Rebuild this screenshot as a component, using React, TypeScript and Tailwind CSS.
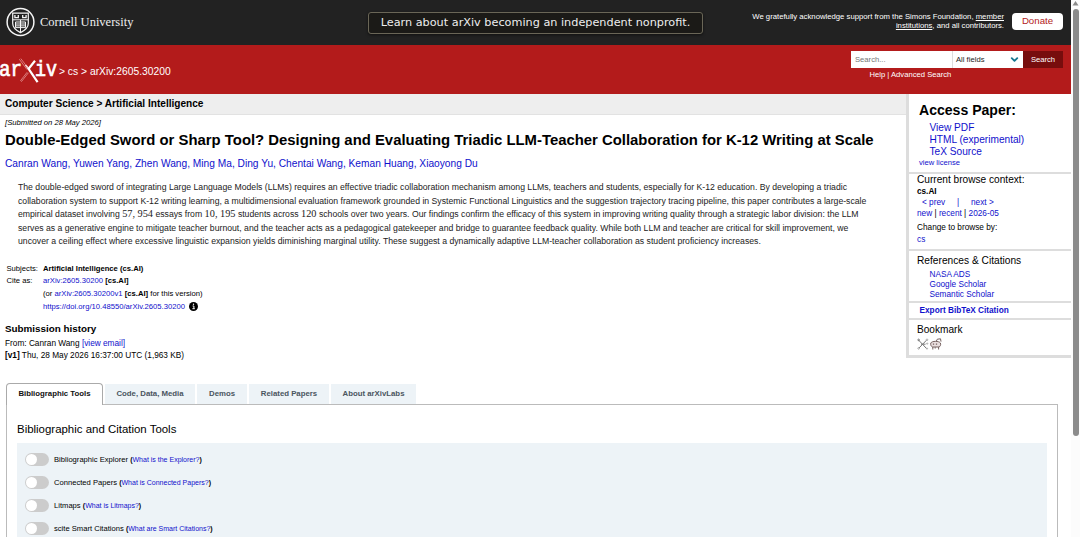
import type { ReactNode } from "react";
import { ChevronDown } from "lucide-react";

const authors = [
  "Canran Wang",
  "Yuwen Yang",
  "Zhen Wang",
  "Ming Ma",
  "Ding Yu",
  "Chentai Wang",
  "Keman Huang",
  "Xiaoyong Du",
];

const tabs = [
  { label: "Code, Data, Media", width: "w-[90px]" },
  { label: "Demos", width: "w-[50px]" },
  { label: "Related Papers", width: "w-[80px]" },
  { label: "About arXivLabs", width: "w-[85px]" },
];

const tools = [
  { name: "Bibliographic Explorer", help: "What is the Explorer?" },
  { name: "Connected Papers", help: "What is Connected Papers?" },
  { name: "Litmaps", help: "What is Litmaps?" },
  { name: "scite Smart Citations", help: "What are Smart Citations?" },
];

function Link({ children, className = "" }: { children: ReactNode; className?: string }) {
  return (
    <a href="#" className={`text-[#1010cc] ${className}`}>
      {children}
    </a>
  );
}

function Num({ children }: { children: ReactNode }) {
  return <span className="font-['Liberation_Serif'] text-[10.3px] leading-none">{children}</span>;
}

function CornellSeal() {
  return (
    <svg width="30" height="30" viewBox="0 0 30 30" fill="none" stroke="#f4f4f4">
      <circle cx="15.5" cy="15" r="13.4" strokeWidth="1.5" />
      <g transform="translate(.5 0)">
        <path d="M7.2 6.2h15.6v10.2c0 4.6-3.6 7-7.8 9.2-4.2-2.2-7.8-4.6-7.8-9.2z" strokeWidth="1.2" />
        <path d="M7.2 12.8h15.6M15 13v12.5" strokeWidth="1" />
        <path d="M9.4 8v2.6h3.4V8M17.2 8v2.6h3.4V8" strokeWidth="1.3" />
        <path d="M10 15h10v5.6H10zM10 17h10M10 18.9h10" strokeWidth="1" />
      </g>
    </svg>
  );
}

function ArxivLogo() {
  return (
    <svg width="58" height="28" viewBox="0 0 58 28" fill="#fff">
      <g className="font-['Liberation_Mono']" fontSize="21.5" stroke="#fff" strokeWidth="0.7">
        <text x="-1" y="19" textLength="23" lengthAdjust="spacingAndGlyphs">ar</text>
        <text x="35" y="19" textLength="22" lengthAdjust="spacingAndGlyphs">iv</text>
      </g>
      <path d="M35 3.8 28.6 11.8 37.6 25.2" fill="none" stroke="#fff" strokeWidth="2.2" />
      <path d="M28.6 11.8 25.5 8" fill="none" stroke="#fff" strokeWidth="1.6" />
      <path
        d="M19.3 2.2 27 12.6M20.8 1.6 28 11M27.2 15.2 20.6 23.6l1 .8 6.8-8.6"
        fill="none"
        stroke="#e9a5a5"
        strokeWidth="0.7"
      />
    </svg>
  );
}

function Header() {
  return (
    <header className="text-white">
      <div className="flex h-[45px] items-center bg-[#222]">
        <div className="flex w-[368px] items-center gap-[5px] pb-px pl-[5px]">
          <CornellSeal />
          <span className="whitespace-nowrap font-['Liberation_Serif'] text-[12.5px] text-[#eee]">
            Cornell University
          </span>
        </div>
        <div className="flex h-[22px] w-[335px] items-center justify-center whitespace-nowrap rounded-[3px] border border-[#6a6657] bg-[#1b1a17] pt-px font-['DejaVu_Sans'] text-[11.26px] text-[#eee] shadow-[0_1px_3px_#0008]">
          Learn about arXiv becoming an independent nonprofit.
        </div>
        <div className="ml-auto mr-[8px] whitespace-nowrap pb-[3px] text-right text-[7.73px] leading-[9px]">
          We gratefully acknowledge support from the Simons Foundation, <span className="underline">member</span>
          <br />
          <span className="underline">institutions</span>, and all contributors.
        </div>
        <button className="mb-[3px] mr-[8px] h-[17px] w-[51px] rounded-[4px] bg-white text-[9.7px] leading-[16px] text-[#b31b1b]">
          Donate
        </button>
      </div>
      <div className="flex h-[49px] justify-between bg-[#b31b1b]">
        <div className="flex items-start">
          <div className="mt-[12px]">
            <ArxivLogo />
          </div>
          <span className="ml-[1px] mt-[20px] whitespace-nowrap text-[10.3px] leading-[14px]">
            &gt; cs &gt; arXiv:2605.30200
          </span>
        </div>
        <div className="mr-[8px] mt-[6px] w-[212px] text-[7.65px]">
          <div className="flex h-[17px]">
            <span className="w-[101px] bg-white pl-[4px] leading-[17px] text-[#757575]">Search...</span>
            <span className="flex w-[71px] items-center justify-between border-l border-[#ddd] bg-white pl-[3px] pr-[3px] leading-[16px] text-[#222]">
              All fields
              <ChevronDown size={11} strokeWidth={4} color="#14768f" />
            </span>
            <span className="w-[40px] bg-[#770d0d] text-center leading-[18px]">Search</span>
          </div>
          <div className="ml-[18.5px] mt-[2px] leading-[10px]">Help | Advanced Search</div>
        </div>
      </div>
    </header>
  );
}

function Abstract() {
  return (
    <blockquote className="ml-[18px] mt-[9px] whitespace-nowrap text-[8.68px] leading-[13.5px] text-[#222]">
      <div className="h-[13.5px]">
        The double-edged sword of integrating Large Language Models (LLMs) requires an effective triadic collaboration
        mechanism among LLMs, teachers and students, especially for K-12 education. By developing a triadic
      </div>
      <div className="h-[13.5px]">
        collaboration system to support K-12 writing learning, a multidimensional evaluation framework grounded in
        Systemic Functional Linguistics and the suggestion trajectory tracing pipeline, this paper contributes a
        large-scale
      </div>
      <div className="h-[13.5px]">
        empirical dataset involving <Num>57, 954</Num> essays from <Num>10, 195</Num> students across <Num>120</Num>{" "}
        schools over two years. Our findings confirm the efficacy of this system in improving writing quality through a
        strategic labor division: the LLM
      </div>
      <div className="h-[13.5px]">
        serves as a generative engine to mitigate teacher burnout, and the teacher acts as a pedagogical gatekeeper and
        bridge to guarantee feedback quality. While both LLM and teacher are critical for skill improvement, we
      </div>
      <div className="h-[13.5px]">
        uncover a ceiling effect where excessive linguistic expansion yields diminishing marginal utility. These suggest
        a dynamically adaptive LLM-teacher collaboration as student proficiency increases.
      </div>
    </blockquote>
  );
}

function Paper() {
  return (
    <main className="flex-1">
      <div className="h-[21px] border-b border-[#e2e2e2] bg-[#eee] pl-[5px] text-[10.1px] font-bold leading-[20px]">
        Computer Science &gt; Artificial Intelligence
      </div>
      <div className="whitespace-nowrap pl-[5px]">
        <div className="mt-[2px] text-[7.68px] italic leading-[11px]">[Submitted on 28 May 2026]</div>
        <h1 className="mt-[2px] text-[14.88px] font-bold leading-[20px]">
          Double-Edged Sword or Sharp Tool? Designing and Evaluating Triadic LLM-Teacher Collaboration for K-12 Writing
          at Scale
        </h1>
        <div className="mt-[6px] text-[10.2px] leading-[16px] text-[#1010cc]">{authors.join(", ")}</div>
      </div>
      <Abstract />
      <div className="ml-[6.5px] mt-[14px] grid grid-cols-[36.5px_auto] text-[7.67px] leading-[12.8px]">
        <span>Subjects:</span>
        <b>Artificial Intelligence (cs.AI)</b>
        <span>Cite as:</span>
        <span>
          <Link>arXiv:2605.30200</Link> <b>[cs.AI]</b>
        </span>
        <span className="col-start-2">
          (or <Link>arXiv:2605.30200v1</Link> <b>[cs.AI]</b> for this version)
        </span>
        <span className="col-start-2 flex items-center gap-[4px]">
          <Link>https://doi.org/10.48550/arXiv.2605.30200</Link>
          <svg width="9" height="9" viewBox="0 0 9 9" className="-mt-px">
            <circle cx="4.5" cy="4.5" r="4.5" />
            <path d="M3.6 4h1.3v2.6M3.4 6.7h2.4" stroke="#fff" fill="none" />
            <circle cx="4.5" cy="2.3" r=".7" fill="#fff" />
          </svg>
        </span>
      </div>
      <div className="ml-[5px] mt-[8px]">
        <h2 className="text-[9.86px] font-bold leading-[14px]">Submission history</h2>
        <div className="mt-[2px] text-[8.27px] leading-[12.5px]">
          From: Canran Wang <Link>[view email]</Link>
          <br />
          <b>[v1]</b> Thu, 28 May 2026 16:37:00 UTC (1,963 KB)
        </div>
      </div>
    </main>
  );
}

function BookmarkIcons() {
  return (
    <div className="flex gap-px">
      <svg width="12" height="12" viewBox="0 0 12 12" fill="none" stroke="#777" strokeWidth="1">
        <path d="M1.5 2 9.5 10.5M9.5 2.2 2 10M4 6.2h4.5" />
        <circle cx="1.6" cy="1.9" r=".8" />
        <circle cx="10" cy="1.8" r=".8" stroke="#aaa" />
        <circle cx="10.2" cy="5.6" r=".6" stroke="#aaa" />
        <circle cx="1.6" cy="10.4" r=".8" stroke="#aaa" />
        <circle cx="10" cy="10.6" r=".6" stroke="#aaa" />
      </svg>
      <svg width="12" height="12" viewBox="0 0 12 12" fill="none" stroke="#75605f" strokeWidth="1">
        <path d="M.8 5c1.2-2.2 8.2-2.2 9.6 0 .6 1.8 0 3.4-1.4 4H2.6C1 8.4.4 6.8.8 5z" fill="#eadfdf" />
        <path d="M2.8 9v2.5M8.6 9v2.5M5.2 9.2v1.3M6.3 3.2 7.3 1.2 10.5.8 11 3.6" />
        <path d="M3.5 5.5v1.2M6.5 5.5v1.2" strokeWidth="1.3" />
      </svg>
    </div>
  );
}

function Sidebar() {
  return (
    <aside className="h-[264px] w-[165px] whitespace-nowrap border-b-[3px] border-l-[3px] border-[#ddd] text-[8.25px]">
      <div className="h-[80px] border-b-2 border-[#ddd] pl-[10px] pt-[7px]">
        <h2 className="text-[14.07px] font-bold leading-[18px]">Access Paper:</h2>
        <ul className="mt-[3px] pl-[10.5px] text-[10.15px] leading-[12px]">
          <li><Link>View PDF</Link></li>
          <li><Link>HTML (experimental)</Link></li>
          <li><Link>TeX Source</Link></li>
        </ul>
        <div className="text-[7.6px] leading-[10px]"><Link>view license</Link></div>
      </div>
      <div className="h-[77px] border-b-2 border-[#ddd] pl-[8px]">
        <div className="text-[10.13px] leading-[12px]">Current browse context:</div>
        <div className="text-[8.2px] font-bold leading-[11px]">cs.AI</div>
        <div className="flex pl-[5px] leading-[11px]">
          <Link className="w-[35px]">&lt; prev</Link>
          <span className="w-[14px] text-[#1010cc]">|</span>
          <Link>next &gt;</Link>
        </div>
        <div className="leading-[12px]">
          <Link>new</Link> | <Link>recent</Link> | <Link>2026-05</Link>
        </div>
        <div className="mt-[2px] leading-[12px]">Change to browse by:</div>
        <div className="leading-[12px]"><Link>cs</Link></div>
      </div>
      <div className="h-[52px] border-b-2 border-[#ddd] pl-[8px] pt-[3px]">
        <h3 className="text-[10.2px] leading-[14px]">References &amp; Citations</h3>
        <ul className="mt-[2px] pl-[12.5px] leading-[9.9px]">
          <li><Link>NASA ADS</Link></li>
          <li><Link>Google Scholar</Link></li>
          <li><Link>Semantic Scholar</Link></li>
        </ul>
      </div>
      <div className="h-[17px] border-b-2 border-[#ddd] pl-[10.5px] font-bold leading-[15px]">
        <Link>Export BibTeX Citation</Link>
      </div>
      <div className="pl-[8px] pt-[2px]">
        <h3 className="mb-px text-[10.11px] leading-[15px]">Bookmark</h3>
        <BookmarkIcons />
      </div>
    </aside>
  );
}

function Labs() {
  return (
    <section className="ml-[6px] mt-[25px] w-[1052px] flex-1">
      <div className="relative z-10 flex h-[22px] gap-[2px] text-[7.8px] font-bold leading-[21px] text-[#4a5560]">
        <span className="w-[97px] rounded-t-[4px] border border-b-0 border-[#aaa] bg-white text-center leading-[20px] text-[#111]">
          Bibliographic Tools
        </span>
        {tabs.map((tab) => (
          <span key={tab.label} className={`mb-px mt-px bg-[#edf3f7] text-center leading-[20px] ${tab.width}`}>
            {tab.label}
          </span>
        ))}
      </div>
      <div className="-mt-px h-[200px] border border-[#bbb] bg-white px-[10px] pt-[15px]">
        <h2 className="text-[11.45px] leading-[18px]">Bibliographic and Citation Tools</h2>
        <div className="mt-[5px] h-[160px] bg-[#edf3f7] pl-[7.5px] pt-[5.5px]">
          {tools.map((tool) => (
            <div key={tool.name} className="flex h-[22.9px] items-center text-[7.61px]">
              <span className="mr-[5.5px] flex h-[13px] w-[24px] items-center rounded-full bg-[#ccc] px-px">
                <span className="size-[11px] rounded-full bg-white" />
              </span>
              <span>
                {tool.name}{" "}
                <span className="text-[7px]">
                  <b>(</b>
                  <Link>{tool.help}</Link>
                  <b>)</b>
                </span>
              </span>
            </div>
          ))}
        </div>
      </div>
    </section>
  );
}

export default function App() {
  return (
    <div className="flex h-[537px] overflow-hidden bg-white font-['Liberation_Sans',sans-serif] text-black">
      <div className="flex w-[1071px] flex-col">
        <Header />
        <div className="flex h-[264px]">
          <Paper />
          <Sidebar />
        </div>
        <Labs />
      </div>
      <div className="flex w-[9px] flex-col items-center bg-[#fcfcfc]">
        <svg className="mt-px" width="7" height="5" viewBox="0 0 7 5" fill="#8b8b8b">
          <path d="M3.5 0 6.5 4.5H.5z" />
        </svg>
        <div className="mt-[3px] h-[427px] w-[6px] rounded-full bg-[#8b8b8b]" />
      </div>
    </div>
  );
}
